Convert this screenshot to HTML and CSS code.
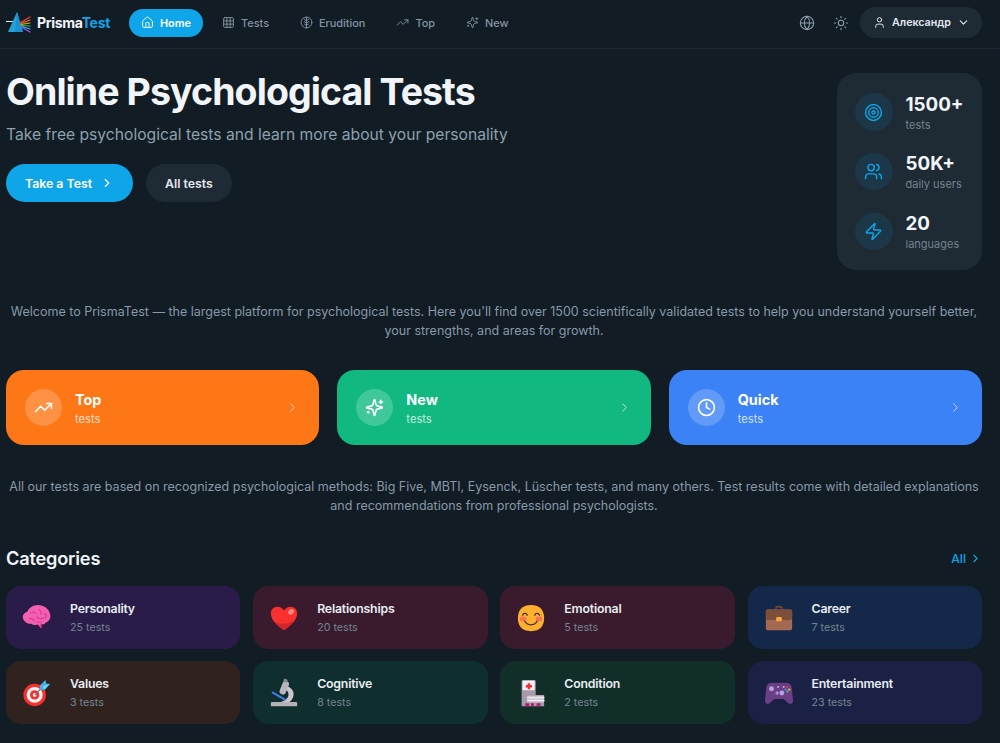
FILE: index.html
```html
<!DOCTYPE html>
<html lang="en">
<head>
<meta charset="utf-8">
<title>PrismaTest</title>
<link rel="stylesheet" href="styles.css">
</head>
<body>
<svg class="sprite" aria-hidden="true">
  <symbol id="i-home" viewBox="0 0 24 24"><path d="M15 21v-8a1 1 0 0 0-1-1h-4a1 1 0 0 0-1 1v8"/><path d="M3 10a2 2 0 0 1 .709-1.528l7-5.999a2 2 0 0 1 2.582 0l7 5.999A2 2 0 0 1 21 10v9a2 2 0 0 1-2 2H5a2 2 0 0 1-2-2z"/></symbol>
  <symbol id="i-grid" viewBox="0 0 24 24"><rect x="3" y="3" width="18" height="18" rx="2"/><path d="M3 9h18M3 15h18M9 3v18M15 3v18"/></symbol>
  <symbol id="i-erudition" viewBox="0 0 24 24"><circle cx="12" cy="12" r="10"/><path d="M12 2v20M12 9 8 6M12 9l4-3M12 13l-4-2.500M12 13l4-2.500M12 17l-3.500-2M12 17l3.500-2"/></symbol>
  <symbol id="i-trend" viewBox="0 0 24 24"><path d="M22 7 13.500 15.500 8.500 10.500 2 17"/><path d="M16 7h6v6"/></symbol>
  <symbol id="i-sparkles" viewBox="0 0 24 24"><path d="M9.937 15.500A2 2 0 0 0 8.500 14.063l-6.135-1.582a.5.5 0 0 1 0-.962L8.500 9.936A2 2 0 0 0 9.937 8.500l1.582-6.135a.5.5 0 0 1 .963 0L14.063 8.500A2 2 0 0 0 15.500 9.937l6.135 1.581a.5.5 0 0 1 0 .964L15.500 14.063a2 2 0 0 0-1.437 1.437l-1.582 6.135a.5.5 0 0 1-.963 0z"/><path d="M20 3v4M22 5h-4M4 17v2M5 18H3"/></symbol>
  <symbol id="i-globe" viewBox="0 0 24 24"><circle cx="12" cy="12" r="10"/><path d="M12 2a14.500 14.500 0 0 0 0 20 14.500 14.500 0 0 0 0-20M2 12h20"/></symbol>
  <symbol id="i-sun" viewBox="0 0 24 24"><circle cx="12" cy="12" r="4"/><path d="M12 2v2M12 20v2M4.930 4.930l1.410 1.410M17.660 17.660l1.410 1.410M2 12h2M20 12h2M6.340 17.660l-1.410 1.410M19.070 4.930l-1.410 1.410"/></symbol>
  <symbol id="i-user" viewBox="0 0 24 24"><path d="M19 21v-2a4 4 0 0 0-4-4H9a4 4 0 0 0-4 4v2"/><circle cx="12" cy="7" r="4"/></symbol>
  <symbol id="i-down" viewBox="0 0 24 24"><path d="m6 9 6 6 6-6"/></symbol>
  <symbol id="i-right" viewBox="0 0 24 24"><path d="m9 18 6-6-6-6"/></symbol>
  <symbol id="i-target" viewBox="0 0 24 24"><circle cx="12" cy="12" r="10"/><circle cx="12" cy="12" r="6"/><circle cx="12" cy="12" r="2"/></symbol>
  <symbol id="i-users" viewBox="0 0 24 24"><path d="M16 21v-2a4 4 0 0 0-4-4H6a4 4 0 0 0-4 4v2"/><circle cx="9" cy="7" r="4"/><path d="M22 21v-2a4 4 0 0 0-3-3.870M16 3.130a4 4 0 0 1 0 7.750"/></symbol>
  <symbol id="i-zap" viewBox="0 0 24 24"><path d="M4 14a1 1 0 0 1-.78-1.630l9.900-10.200a.5.5 0 0 1 .86.46l-1.920 6.020A1 1 0 0 0 13 10h7a1 1 0 0 1 .78 1.630l-9.900 10.200a.5.5 0 0 1-.86-.46l1.920-6.020A1 1 0 0 0 11 14z"/></symbol>
  <symbol id="i-clock" viewBox="0 0 24 24"><circle cx="12" cy="12" r="10"/><path d="M12 6v6l4 2"/></symbol>
</svg>

<header class="topbar">
  <a class="logo">
    <svg class="logo-mark" viewBox="0 0 25 21">
      <path d="M0 9.500h10" stroke="#e8eef2" stroke-width="1.100"/>
      <path d="M11 0 2 20h15z" fill="#22a3dc"/>
      <path d="M11 0 9 20h8z" fill="#1c8fcf"/>
      <path d="M14.500 10.500 24 5" stroke="#ef4444" stroke-width="1.200"/>
      <path d="M15 11.500 24 8" stroke="#f97316" stroke-width="1.200"/>
      <path d="M15 12.500 24 11" stroke="#eab308" stroke-width="1.200"/>
      <path d="M15.500 13.500 24 14" stroke="#22c55e" stroke-width="1.200"/>
      <path d="M16 14.500 24 17" stroke="#38bdf8" stroke-width="1.200"/>
      <path d="M16 15.500 24 20" stroke="#a855f7" stroke-width="1.200"/>
    </svg>
    <span class="logo-text">Prisma<span class="logo-accent">Test</span></span>
  </a>
  <nav class="nav">
    <a class="nav-item active"><svg class="ic"><use href="#i-home"/></svg>Home</a>
    <a class="nav-item"><svg class="ic"><use href="#i-grid"/></svg>Tests</a>
    <a class="nav-item"><svg class="ic"><use href="#i-erudition"/></svg>Erudition</a>
    <a class="nav-item"><svg class="ic"><use href="#i-trend"/></svg>Top</a>
    <a class="nav-item"><svg class="ic"><use href="#i-sparkles"/></svg>New</a>
  </nav>
  <div class="top-actions">
    <span class="icon-btn"><svg class="ic-top"><use href="#i-globe"/></svg></span>
    <span class="icon-btn"><svg class="ic-top"><use href="#i-sun"/></svg></span>
    <button class="user-btn"><svg class="ic-user"><use href="#i-user"/></svg><span>Александр</span><svg class="ic-caret"><use href="#i-down"/></svg></button>
  </div>
</header>

<main class="page">
  <section class="hero">
    <div class="hero-copy">
      <h1>Online Psychological Tests</h1>
      <p class="subtitle">Take free psychological tests and learn more about your personality</p>
      <div class="hero-buttons">
        <a class="btn btn-primary">Take a Test<svg class="ic-btn"><use href="#i-right"/></svg></a>
        <a class="btn btn-dark">All tests</a>
      </div>
    </div>
    <aside class="stats">
      <div class="stat"><span class="stat-ic"><svg><use href="#i-target"/></svg></span><div class="stat-text"><div class="stat-num">1500+</div><div class="stat-label">tests</div></div></div>
      <div class="stat"><span class="stat-ic"><svg><use href="#i-users"/></svg></span><div class="stat-text"><div class="stat-num">50K+</div><div class="stat-label">daily users</div></div></div>
      <div class="stat"><span class="stat-ic"><svg><use href="#i-zap"/></svg></span><div class="stat-text"><div class="stat-num">20</div><div class="stat-label">languages</div></div></div>
    </aside>
  </section>

  <p class="lead lead-1">Welcome to PrismaTest — the largest platform for psychological tests. Here you'll find over 1500 scientifically validated tests to help you understand yourself better, your strengths, and areas for growth.</p>

  <section class="quick">
    <a class="quick-card orange"><span class="quick-ic"><svg><use href="#i-trend"/></svg></span><div class="quick-text"><div class="quick-title">Top</div><div class="quick-sub">tests</div></div><svg class="quick-arrow"><use href="#i-right"/></svg></a>
    <a class="quick-card green"><span class="quick-ic"><svg><use href="#i-sparkles"/></svg></span><div class="quick-text"><div class="quick-title">New</div><div class="quick-sub">tests</div></div><svg class="quick-arrow"><use href="#i-right"/></svg></a>
    <a class="quick-card blue"><span class="quick-ic"><svg><use href="#i-clock"/></svg></span><div class="quick-text"><div class="quick-title">Quick</div><div class="quick-sub">tests</div></div><svg class="quick-arrow"><use href="#i-right"/></svg></a>
  </section>

  <p class="lead lead-2">All our tests are based on recognized psychological methods: Big Five, MBTI, Eysenck, Lüscher tests, and many others. Test results come with detailed explanations and recommendations from professional psychologists.</p>

  <div class="section-head">
    <h2>Categories</h2>
    <a class="all-link">All<svg><use href="#i-right"/></svg></a>
  </div>

  <section class="cats">
    <a class="cat c-purple">
      <svg class="emoji" viewBox="0 0 32 32"><path d="M6 9c1-4 6-7 11-7 6 0 12 4 13 10 1 4-1 8-5 9-1 2-3 2-4 1l-1 5-3-4c-3 1-6 0-7-1-4 1-8-2-9-6-1-3 2-6 5-7z" fill="#f45fb2"/><path d="M21 22l.5 5-3-3z" fill="#db2777"/><path d="M9 11c2-2 5-2 6 0M18 7c2 1 3 3 2 5M24 11c2 1 2 3 1 5M8 17c2-1 4 0 5 2M16 15c2 2 5 2 7 1M16 21c1-1 3-1 4 0" fill="none" stroke="#d6368a" stroke-width="1.100" stroke-linecap="round"/></svg>
      <div><div class="cat-name">Personality</div><div class="cat-count">25 tests</div></div>
    </a>
    <a class="cat c-wine">
      <svg class="emoji" viewBox="0 0 32 32"><path d="M16 29C10 25 2 19 2 11c0-4 3-7 7-7 3 0 5.500 1.500 7 4 1.500-2.500 4-4 7-4 4 0 7 3 7 7 0 8-8 14-14 18z" fill="#f8312f"/><path d="M16 29c-3-2-7-5-10-9 5 3 14 3 20-2-2 5-6 8.500-10 11z" fill="#d3262c"/><ellipse cx="23.500" cy="9.500" rx="3.500" ry="2.500" transform="rotate(-35 23.500 9.500)" fill="#ff8687"/></svg>
      <div><div class="cat-name">Relationships</div><div class="cat-count">20 tests</div></div>
    </a>
    <a class="cat c-wine">
      <svg class="emoji" viewBox="0 0 32 32"><path d="M16 2c10 0 14 6 14 14s-4 14-14 14S2 24 2 16 6 2 16 2z" fill="#fcb02e"/><ellipse cx="7.500" cy="17" rx="3.500" ry="2.500" fill="#f8705a"/><ellipse cx="24.500" cy="17" rx="3.500" ry="2.500" fill="#f8705a"/><path d="M7 13c1-2.500 4-2.500 5 0M20 13c1-2.500 4-2.500 5 0M9.500 19.500c3 5 10 5 13 0" fill="none" stroke="#402a32" stroke-width="1.400" stroke-linecap="round"/></svg>
      <div><div class="cat-name">Emotional</div><div class="cat-count">5 tests</div></div>
    </a>
    <a class="cat c-navy">
      <svg class="emoji" viewBox="0 0 32 32"><path d="M12 7V5.500C12 4 13 3 14.500 3h3C19 3 20 4 20 5.500V7h-1.500V5.500c0-.3-.2-.5-.5-.5h-4c-.3 0-.5.2-.5.5V7z" fill="#6d4534"/><rect x="2" y="7" width="28" height="22" rx="2" fill="#a56953"/><path d="M2 9c0-1 1-2 2-2h24c1 0 2 1 2 2v7c0 1-1 2-2 2H4c-1 0-2-1-2-2z" fill="#7d4f3b"/><rect x="13" y="15" width="6" height="4.500" rx="1" fill="#f9a83a"/></svg>
      <div><div class="cat-name">Career</div><div class="cat-count">7 tests</div></div>
    </a>
    <a class="cat c-brown">
      <svg class="emoji" viewBox="0 0 32 32"><circle cx="13.500" cy="18" r="12" fill="#f8312f"/><circle cx="13.500" cy="18" r="8.500" fill="#f4f4f4"/><circle cx="13.500" cy="18" r="5" fill="#f8312f"/><circle cx="13.500" cy="18" r="2" fill="#f4f4f4"/><path d="M14 18 24 7" stroke="#6b7280" stroke-width="1.300"/><path d="M19 8l6-6 1 4 4 .5-6 6.500-5-1z" fill="#3fb5ea"/><path d="M22 9l7-3-5 6z" fill="#7fd4f5"/></svg>
      <div><div class="cat-name">Values</div><div class="cat-count">3 tests</div></div>
    </a>
    <a class="cat c-teal">
      <svg class="emoji" viewBox="0 0 32 32"><path d="M2 27c0-1 .5-1.500 1.500-1.500h25c1 0 1.500.5 1.500 1.500v3H2z" fill="#b4b0b8"/><path d="M20 9c5 2 7 6 6 10-.5 3-2 5-4 6.500h-9c2-1 6-2 7.500-6 1-3-.5-6-3-7.500z" fill="#c9c6cc"/><rect x="13" y="3" width="7" height="15" rx="3.500" transform="rotate(22 16.500 10)" fill="#b8b4bd"/><rect x="15.500" y="1" width="4" height="3.500" rx="1" transform="rotate(22 17.500 3)" fill="#8d8794"/><path d="M4 15.500 17 23" stroke="#3f7df0" stroke-width="2.200" stroke-linecap="round"/></svg>
      <div><div class="cat-name">Cognitive</div><div class="cat-count">8 tests</div></div>
    </a>
    <a class="cat c-forest">
      <svg class="emoji" viewBox="0 0 32 32"><path d="M6 3.500C6 2.700 6.700 2 7.500 2h12c.8 0 1.500.7 1.500 1.500V18h9v12H6z" fill="#a69aa9"/><rect x="7" y="3" width="13" height="10" rx="1" fill="#f3eef8"/><path d="M12.500 5.500h2.500v2h2v2.500h-2v2h-2.500v-2h-2V7.500h2z" fill="#f8312f"/><rect x="12" y="19" width="18" height="7" fill="#cfc7d3"/><path d="M12 21h18M12 24h18" stroke="#f3eef8" stroke-width="1.100"/><path d="M10 27h4v3h-4zM16 27h3v3h-3zM22 27h4v3h-4z" fill="#b5196e"/></svg>
      <div><div class="cat-name">Condition</div><div class="cat-count">2 tests</div></div>
    </a>
    <a class="cat c-indigo">
      <svg class="emoji" viewBox="0 0 32 32"><path d="M8 5h16c3 0 5 2 5.500 5L31 24c.3 3-3 5-5 3l-5-4.500H11L6 27c-2 2-5.300 0-5-3l1.500-14C3 7 5 5 8 5z" fill="#6b3f86"/><path d="M9 5c1-1 4-1 5 0zM18 5c1-1 4-1 5 0z" fill="#321b41"/><circle cx="8" cy="11.500" r="2.600" fill="#b4a2e8"/><circle cx="19" cy="16" r="2.600" fill="#b4a2e8"/><path d="M12.500 16h3M14 14.500v3" stroke="#b4a2e8" stroke-width="1.200"/><circle cx="15" cy="9.500" r="1" fill="#cdbcf0"/><circle cx="21" cy="9.500" r="1" fill="#cdbcf0"/><circle cx="25" cy="10" r="1.200" fill="#f8312f"/><circle cx="23" cy="12.300" r="1.200" fill="#2d9cf4"/><circle cx="27" cy="12.300" r="1.200" fill="#f9c23c"/><circle cx="25" cy="14.500" r="1.200" fill="#3ccf68"/></svg>
      <div><div class="cat-name">Entertainment</div><div class="cat-count">23 tests</div></div>
    </a>
  </section>
</main>
</body>
</html>
```
FILE: styles.css
```css
* { box-sizing: border-box; }
html, body { margin: 0; padding: 0; }
body {
  width: 1000px;
  height: 743px;
  overflow: hidden;
  background: #111c24;
  color: #f1f5f9;
  font-family: Inter, "Liberation Sans", sans-serif;
}
a { color: inherit; text-decoration: none; }
.sprite { display: none; }
svg { fill: none; stroke: currentColor; stroke-width: 2; stroke-linecap: round; stroke-linejoin: round; }
.emoji, .logo-mark { stroke: none; }

.topbar {
  height: 49px;
  border-bottom: 1px solid #1c2932;
  display: flex;
  align-items: center;
  padding: 0 18px 3px 6px;
}
.logo { display: flex; align-items: center; gap: 6px; width: 123px; }
.logo-mark { width: 25px; height: 21px; flex: none; }
.logo-text { font-size: 14.1px; font-weight: 700; letter-spacing: -0.35px; color: #f1f5f9; }
.logo-accent { color: #0ea5e9; }
.nav { display: flex; align-items: center; gap: 1px; }
.nav-item {
  display: flex;
  align-items: center;
  gap: 6px;
  height: 28px;
  padding: 0 18px 0 12px;
  border-radius: 14px;
  font-size: 10.9px;
  font-weight: 500;
  color: #8393a3;
}
.nav-item .ic { width: 13px; height: 13px; stroke-width: 1.7; flex: none; }
.nav-item.active { background: #0ea5e9; color: #fff; font-weight: 600; padding-right: 12px; margin-right: 6px; }
.top-actions { margin-left: auto; display: flex; align-items: center; color: #8ea0ae; }
.icon-btn { width: 34px; height: 34px; display: flex; align-items: center; justify-content: center; }
.ic-top { width: 16px; height: 16px; stroke-width: 1.6; }
.user-btn {
  display: flex;
  align-items: center;
  gap: 6px;
  height: 31px;
  width: 122px;
  padding: 0 12px 0 13px;
  margin-left: 2px;
  border: 0;
  border-radius: 16px;
  background: #1e2a34;
  color: #e2e8f0;
  font: 600 10.7px Inter, "Liberation Sans", sans-serif;
}
.ic-user { width: 13px; height: 13px; stroke-width: 1.8; flex: none; }
.ic-caret { width: 13px; height: 13px; flex: none; margin-left: auto; }

.page { padding: 0 18px 0 6px; }
.hero { display: flex; justify-content: space-between; padding-top: 24px; }
h1 { margin: 0; font-size: 37.5px; line-height: 38px; font-weight: 700; letter-spacing: -0.93px; color: #f1f5f9; }
.subtitle { margin: 12px 0 0; font-size: 15.65px; line-height: 24px; color: #8ea0ae; }
.hero-buttons { display: flex; gap: 13px; margin-top: 17px; }
.btn { display: flex; align-items: center; height: 38px; border-radius: 19px; font-size: 12.3px; font-weight: 600; padding: 0 19px; white-space: nowrap; }
.btn-primary { background: #0ea5e9; color: #fff; gap: 8px; }
.ic-btn { width: 14px; height: 14px; flex: none; }
.btn-dark { background: #1e2a34; color: #e2e8f0; }

.stats {
  width: 145px;
  height: 197px;
  background: #1e2a34;
  border-radius: 19px;
  padding: 20px 18px;
  display: flex;
  flex-direction: column;
  gap: 21.7px;
}
.stat { display: flex; align-items: center; gap: 13px; height: 38px; }
.stat-ic {
  width: 37.5px;
  height: 37.5px;
  flex: none;
  border-radius: 50%;
  background: #1b3748;
  color: #0ea5e9;
  display: flex;
  align-items: center;
  justify-content: center;
}
.stat-ic svg { width: 19px; height: 19px; stroke-width: 1.8; }
.stat-text { padding-top: 1px; white-space: nowrap; }
.stat-num { font-size: 18.75px; line-height: 24px; font-weight: 700; color: #f1f5f9; }
.stat-label { font-size: 11px; line-height: 16px; color: #73838f; }

.lead { margin: 0; text-align: center; font-size: 12.5px; line-height: 19px; color: #8899a9; }
.lead-1 { margin-top: 32px; }
.lead-2 { margin-top: 32px; }

.quick { display: grid; grid-template-columns: repeat(3, 1fr); gap: 18px; margin-top: 30px; }
.quick-card {
  height: 75px;
  border-radius: 18px;
  display: flex;
  align-items: center;
  gap: 13px;
  padding: 0 19px;
  color: #fff;
}
.orange { background: #fd7717; }
.green { background: #11b981; }
.blue { background: #3b82f6; }
.quick-ic {
  width: 37px;
  height: 37px;
  flex: none;
  border-radius: 50%;
  background: rgba(255,255,255,.2);
  display: flex;
  align-items: center;
  justify-content: center;
}
.quick-ic svg { width: 19px; height: 19px; stroke-width: 2; }
.quick-text { flex: 1; padding-top: 4px; }
.quick-title { font-size: 14.4px; line-height: 20px; font-weight: 700; }
.quick-sub { font-size: 11.2px; line-height: 19px; color: rgba(255,255,255,.75); }
.quick-arrow { width: 15px; height: 15px; stroke-width: 1.6; opacity: .7; flex: none; }

.section-head { display: flex; justify-content: space-between; align-items: center; margin-top: 29px; height: 28px; }
h2 { margin: 0; font-size: 18.2px; font-weight: 600; letter-spacing: -0.2px; color: #f1f5f9; }
.all-link { display: flex; align-items: center; gap: 3px; font-size: 12.2px; font-weight: 500; color: #0ea5e9; }
.all-link svg { width: 13px; height: 13px; }

.cats { display: grid; grid-template-columns: repeat(4, 1fr); gap: 12px 12.7px; margin-top: 14px; }
.cat { height: 63px; border-radius: 15px; display: flex; align-items: center; gap: 18px; padding: 0 16px; }
.emoji { width: 30px; height: 30px; flex: none; }
.cat-name { font-size: 12.3px; line-height: 19px; font-weight: 600; letter-spacing: -0.2px; color: #e8edf2; }
.cat-count { font-size: 10.7px; line-height: 19px; color: #73838f; }
.c-purple { background: #2a1c48; }
.c-wine { background: #391b2d; }
.c-navy { background: #14294a; }
.c-brown { background: #30231f; }
.c-teal { background: #0f2e2e; }
.c-forest { background: #122e28; }
.c-indigo { background: #1b2145; }
```
